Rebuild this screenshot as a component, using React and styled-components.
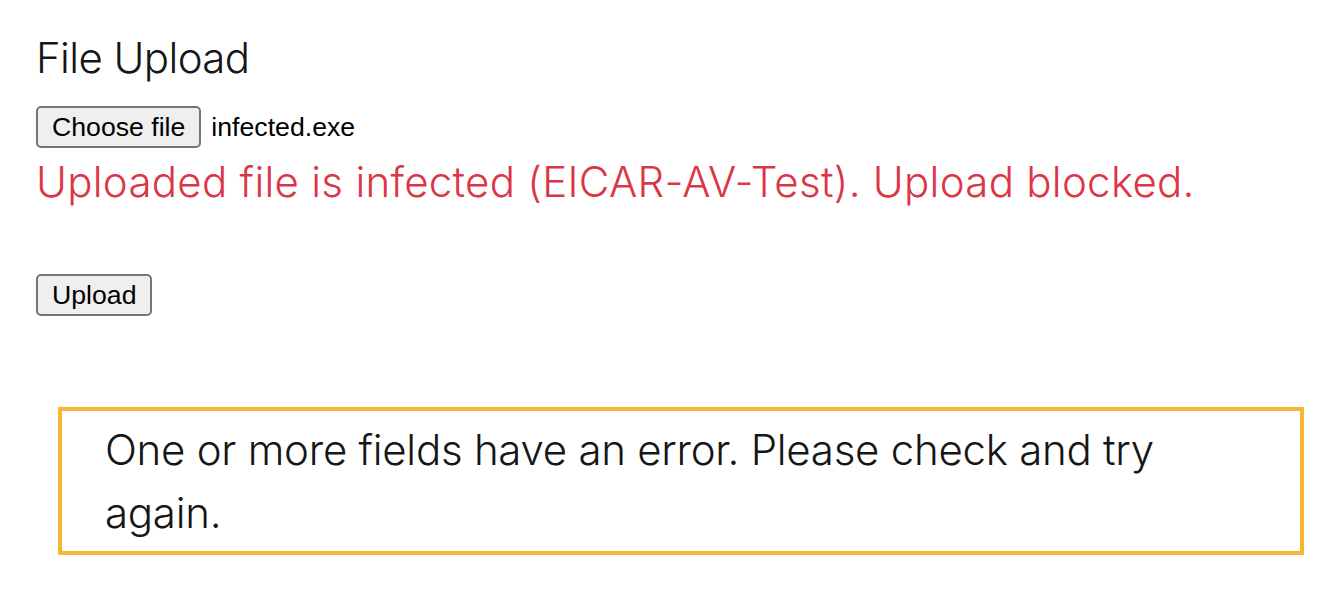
import styled, { createGlobalStyle } from "styled-components";

const GlobalStyle = createGlobalStyle`
  html, body { margin: 0; padding: 0; background: #fff; }
  body { font-family: Inter, "Noto Sans", sans-serif; color: #161616; }
`;

const Page = styled.div`
  display: flex;
  flex-direction: column;
  align-items: flex-start;
  padding: 33px 36px 0 36px;
`;

const Title = styled.h2`
  margin: 0;
  font-size: 42px;
  font-weight: 300;
  line-height: 50px;
  letter-spacing: -0.6px;
  color: #161616;
`;

const FileRow = styled.div`
  display: flex;
  align-items: center;
  gap: 10px;
  margin-top: 23px;
`;

const NativeButton = styled.button`
  font-family: "Liberation Sans", Arial, sans-serif;
  font-size: 26.67px;
  line-height: 30px;
  color: #000;
  background: #efefef;
  border: 2px solid #767676;
  border-radius: 5px;
  padding: 4px 14px;
  margin: 0;
  cursor: pointer;
`;

const FileName = styled.span`
  font-family: "Liberation Sans", Arial, sans-serif;
  font-size: 26.67px;
  color: #000;
`;

const ErrorText = styled.p`
  margin: 9px 0 0 0;
  font-size: 42px;
  font-weight: 300;
  line-height: 50px;
  letter-spacing: 0.28px;
  color: #dc3545;
`;

const UploadButton = styled(NativeButton)`
  margin-top: 67px;
`;

const Alert = styled.div`
  align-self: stretch;
  margin: 91px 4px 0 22px;
  border: 4px solid #fbb534;
  padding: 7px 46px 7px 43px;
  font-size: 42px;
  font-weight: 300;
  line-height: 63px;
  letter-spacing: -0.26px;
  color: #161616;
`;

export default function App() {
  return (
    <>
      <GlobalStyle />
      <Page>
        <Title>File Upload</Title>
        <FileRow>
          <NativeButton type="button">Choose file</NativeButton>
          <FileName>infected.exe</FileName>
        </FileRow>
        <ErrorText>Uploaded file is infected (EICAR-AV-Test). Upload blocked.</ErrorText>
        <UploadButton type="button">Upload</UploadButton>
        <Alert>One or more fields have an error. Please check and try again.</Alert>
      </Page>
    </>
  );
}
